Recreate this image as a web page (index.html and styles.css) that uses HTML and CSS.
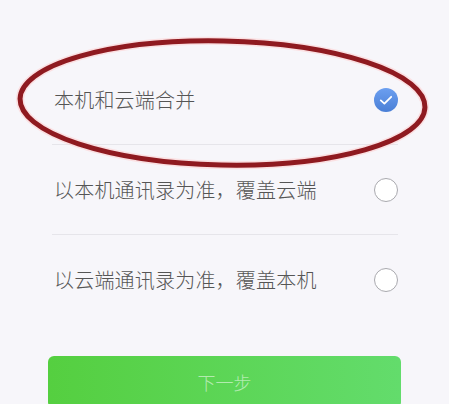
FILE: index.html
```html
<!DOCTYPE html>
<html lang="zh-CN">
<head>
  <meta charset="UTF-8">
  <meta name="viewport" content="width=device-width, initial-scale=1.0">
  <title>合并方式</title>
  <link rel="stylesheet" href="styles.css">
</head>
<body>
  <div class="page">
    <ul class="options">
      <li class="option">
        <span class="label">本机和云端合并</span>
        <span class="check checked">
          <svg viewBox="0 0 24 24" width="24" height="24">
            <defs>
              <linearGradient id="blue" x1="0" y1="0" x2="0" y2="1">
                <stop offset="0" stop-color="#6c9ff0"/>
                <stop offset="1" stop-color="#4a7fd6"/>
              </linearGradient>
            </defs>
            <circle cx="12" cy="12" r="12" fill="url(#blue)"/>
            <path d="M6.8 12.4 L10.4 15.6 L17.2 8.8" fill="none" stroke="#fff" stroke-width="1.8" stroke-linecap="round" stroke-linejoin="round"/>
          </svg>
        </span>
      </li>
      <li class="option">
        <span class="label">以本机通讯录为准，覆盖云端</span>
        <span class="check"></span>
      </li>
      <li class="option last">
        <span class="label">以云端通讯录为准，覆盖本机</span>
        <span class="check"></span>
      </li>
    </ul>

    <button type="button" class="next">下一步</button>

    <svg class="mark" viewBox="0 0 449 404" width="449" height="404">
      <g transform="rotate(1.2 222.5 103)">
        <ellipse cx="222.5" cy="103" rx="202.5" ry="62" fill="none" stroke="#ffc9c9" stroke-width="8" opacity="0.5"/>
        <ellipse cx="222.5" cy="103" rx="202.5" ry="62" fill="none" stroke="#8f1a20" stroke-width="5"/>
      </g>
    </svg>
  </div>
</body>
</html>
```

FILE: styles.css
```css
body {
  margin: 0;
  background-color: #f7f6fa;
  font-family: "Noto Sans CJK SC", "Noto Sans", sans-serif;
  color: #555;
}
.page {
  position: relative;
  width: 449px;
  height: 404px;
  overflow: hidden;
}
.options {
  list-style: none;
  margin: 0;
  padding: 55px 51px 0 52px;
}
.option {
  display: flex;
  align-items: center;
  justify-content: space-between;
  height: 89px;
  border-bottom: 1px solid #e6e5ea;
}
.option.last {
  border-bottom: none;
}
.label {
  font-size: 20px;
  font-weight: 300;
  padding-left: 2px;
  letter-spacing: 0.2px;
}
.check {
  width: 22px;
  height: 22px;
  border: 1px solid #a9a9ae;
  border-radius: 50%;
  background-color: #fff;
}
.check.checked {
  width: 24px;
  height: 24px;
  border: none;
  background: none;
}
.check svg {
  display: block;
}
.next {
  display: block;
  width: 353px;
  height: 52px;
  margin: 32px 0 0 48px;
  border: none;
  border-radius: 6px;
  background: linear-gradient(to right, #55cf40, #63dc6c);
  color: rgba(255, 255, 255, 0.55);
  font-family: inherit;
  font-size: 18px;
  font-weight: 300;
  padding: 0;
}
.mark {
  position: absolute;
  left: 0;
  top: 0;
  pointer-events: none;
}
```
